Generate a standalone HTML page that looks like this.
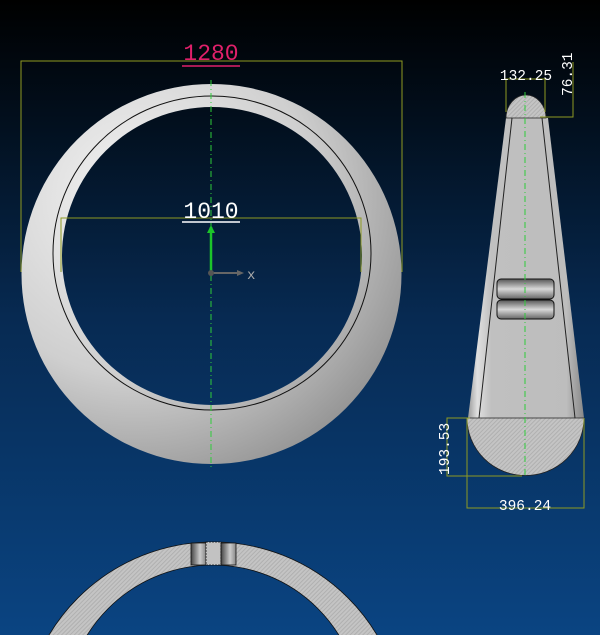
<!DOCTYPE html>
<html><head><style>
html,body{margin:0;padding:0;width:600px;height:635px;overflow:hidden;background:#000}
svg{display:block}
text{font-family:"Liberation Mono",monospace}
</style></head><body>
<svg width="600" height="635" viewBox="0 0 600 635" xmlns="http://www.w3.org/2000/svg" style="overflow:hidden">
<defs>
<clipPath id="clip"><rect width="600" height="635"/></clipPath>
<linearGradient id="bg" x1="0" y1="0" x2="0" y2="1">
<stop offset="0" stop-color="#000000"/>
<stop offset="0.2" stop-color="#02101f"/>
<stop offset="0.5" stop-color="#072a52"/>
<stop offset="1" stop-color="#0a4482"/>
</linearGradient>
<radialGradient id="ring" cx="0.3" cy="0.3" r="0.85">
<stop offset="0" stop-color="#f4f4f4"/>
<stop offset="0.55" stop-color="#cfcfcf"/>
<stop offset="1" stop-color="#8a8a8a"/>
</radialGradient>
<linearGradient id="cone" x1="0" y1="0" x2="1" y2="0">
<stop offset="0" stop-color="#9a9a9a"/>
<stop offset="0.08" stop-color="#e0e0e0"/>
<stop offset="0.2" stop-color="#c0c0c0"/>
<stop offset="0.85" stop-color="#bdbdbd"/>
<stop offset="1" stop-color="#888"/>
</linearGradient>
<linearGradient id="slot" x1="0" y1="0" x2="0" y2="1">
<stop offset="0" stop-color="#555"/>
<stop offset="0.5" stop-color="#d8d8d8"/>
<stop offset="1" stop-color="#666"/>
</linearGradient>
<linearGradient id="slotv" x1="0" y1="0" x2="1" y2="0">
<stop offset="0" stop-color="#444"/>
<stop offset="0.6" stop-color="#ccc"/>
<stop offset="1" stop-color="#888"/>
</linearGradient>
<pattern id="hatch" width="3" height="3" patternUnits="userSpaceOnUse" patternTransform="rotate(45)">
<rect width="3" height="3" fill="#c4c4c4"/><rect width="1" height="3" fill="#b0b0b0"/>
</pattern>
</defs>
<rect width="600" height="635" fill="url(#bg)"/>

<path fill-rule="evenodd" fill="url(#ring)" d="M21.5,274 a190,190 0 1,0 380,0 a190,190 0 1,0 -380,0 Z M62,256 a150,149 0 1,0 300,0 a150,149 0 1,0 -300,0 Z"/>
<ellipse cx="212" cy="253" rx="159" ry="157" fill="none" stroke="#111" stroke-width="1"/>

<g stroke="#8e9a22" stroke-width="1" fill="none">
<path d="M21,272 V61 H402 V272"/>
<path d="M61,272 V218 H361 V272"/>
</g>
<text x="211" y="60" font-size="23" fill="#e0206a" text-anchor="middle">1280</text>
<line x1="182" y1="66" x2="240" y2="66" stroke="#e0206a" stroke-width="1.5"/>
<text x="211" y="218" font-size="23" fill="#fff" text-anchor="middle">1010</text>
<line x1="182" y1="222" x2="240" y2="222" stroke="#fff" stroke-width="1.5"/>
<line x1="211" y1="80" x2="211" y2="468" stroke="#2ecc3a" stroke-dasharray="6,3,1,3"/>
<line x1="211" y1="227" x2="211" y2="272" stroke="#1cc42a" stroke-width="2.5"/>
<path d="M207,233 L211,225 L215,233 Z" fill="#1cc42a"/>
<line x1="211" y1="273" x2="240" y2="273" stroke="#666" stroke-width="2"/>
<path d="M237,270 L244,273 L237,276 Z" fill="#666"/>
<circle cx="211" cy="273" r="3" fill="#555"/>
<text x="247" y="279" font-size="14" fill="#aaa">x</text>

<path d="M506,118 L548,118 L584,418 L468,418 Z" fill="url(#cone)"/>
<path d="M512,118 L479,418 M542,118 L575,418" stroke="#222" stroke-width="1" fill="none"/>
<path d="M506,118 A20,23 0 0,1 546,118 Z" fill="url(#hatch)" stroke="#222" stroke-width="0.8"/>
<path d="M467,418 A58,57 0 0,0 584,418 Z" fill="url(#hatch)" stroke="#222" stroke-width="0.8"/>
<rect x="497" y="279" width="57" height="20" rx="4" fill="url(#slot)" stroke="#111"/>
<rect x="497" y="300" width="57" height="19" rx="4" fill="url(#slot)" stroke="#111"/>
<line x1="525" y1="92" x2="525" y2="478" stroke="#2ecc3a" stroke-dasharray="6,3,1,3"/>
<g stroke="#8e9a22" stroke-width="1" fill="none">
<path d="M506,112 V79 H545 V112"/>
<path d="M540,117 H573 V62"/>
<path d="M467,418 V508 H584 V418"/>
<path d="M522,476 H447 V418 H470"/>
</g>
<text x="526" y="80" font-size="14.5" fill="#fff" text-anchor="middle">132.25</text>
<text transform="translate(572,96) rotate(-90)" font-size="14.5" fill="#fff">76.31</text>
<text transform="translate(449,475) rotate(-90)" font-size="14.5" fill="#fff">193.53</text>
<text x="525" y="510" font-size="14.5" fill="#fff" text-anchor="middle">396.24</text>

<g clip-path="url(#clip)">
<path fill-rule="evenodd" fill="url(#hatch)" stroke="#111" stroke-width="0.8" d="M22,733 a191,191 0 1,1 382,0 a191,191 0 1,1 -382,0 Z M65,713 a148,148 0 1,0 296,0 a148,148 0 1,0 -296,0 Z"/>
</g>
<rect x="191" y="543" width="15" height="22" fill="url(#slotv)" stroke="#111" stroke-width="0.8"/>
<rect x="206" y="542" width="15" height="23" fill="#c2c2c2" stroke="#111" stroke-width="0.8" stroke-dasharray="2,1"/>
<rect x="221" y="543" width="15" height="22" fill="url(#slotv)" stroke="#111" stroke-width="0.8"/>
</svg>
</body></html>
